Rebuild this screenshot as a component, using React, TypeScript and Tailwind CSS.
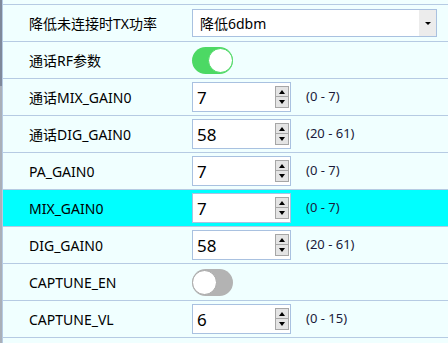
import React from 'react'

type Row =
  | { kind: 'select'; label: string; value: string }
  | { kind: 'toggle'; label: string; on: boolean }
  | { kind: 'spin'; label: string; value: string; range: string; active?: boolean }

const rows: Row[] = [
  { kind: 'select', label: '降低未连接时TX功率', value: '降低6dbm' },
  { kind: 'toggle', label: '通话RF参数', on: true },
  { kind: 'spin', label: '通话MIX_GAIN0', value: '7', range: '(0 - 7)' },
  { kind: 'spin', label: '通话DIG_GAIN0', value: '58', range: '(20 - 61)' },
  { kind: 'spin', label: 'PA_GAIN0', value: '7', range: '(0 - 7)' },
  { kind: 'spin', label: 'MIX_GAIN0', value: '7', range: '(0 - 7)', active: true },
  { kind: 'spin', label: 'DIG_GAIN0', value: '58', range: '(20 - 61)' },
  { kind: 'toggle', label: 'CAPTUNE_EN', on: false },
  { kind: 'spin', label: 'CAPTUNE_VL', value: '6', range: '(0 - 15)' },
]

function Toggle({ on }: { on: boolean }) {
  return (
    <div
      className={
        on
          ? 'flex h-[27px] w-[41px] items-center justify-end rounded-full bg-[#4cd964]'
          : 'flex h-[27px] w-[41px] items-center justify-start rounded-full bg-[#b3b3b3]'
      }
    >
      <div
        className={
          on
            ? 'h-[25px] w-[25px] rounded-full border border-[#4cd964] bg-white'
            : 'h-[25px] w-[25px] rounded-full border border-[#a8a8a8] bg-white'
        }
      />
    </div>
  )
}

function Spinner({ value }: { value: string }) {
  return (
    <div className="flex h-[30px] w-[99px] items-center border border-[#a9c1e0] bg-white pl-[4px] pr-px">
      <span className="flex-1 text-[17px] leading-none text-black">{value}</span>
      <div className="flex flex-col">
        <div className="flex h-[11px] w-[14px] items-center justify-center border border-[#a6a6a6] bg-[#e4e4e4]">
          <div className="h-0 w-0 border-x-[3px] border-b-[4px] border-x-transparent border-b-black" />
        </div>
        <div className="-mt-px flex h-[12px] w-[14px] items-center justify-center border border-[#a6a6a6] bg-[#e4e4e4]">
          <div className="h-0 w-0 border-x-[3px] border-t-[4px] border-x-transparent border-t-black" />
        </div>
      </div>
    </div>
  )
}

function Select({ value }: { value: string }) {
  return (
    <div className="flex h-[28px] w-[245px] items-center border border-[#a9c1e0] bg-white pl-[7px]">
      <span className="flex-1 text-[14px] text-black">{value}</span>
      <div className="flex h-full w-[17px] items-center justify-center bg-[#ececec]">
        <div className="h-0 w-0 border-x-[3px] border-t-[3px] border-x-transparent border-t-black" />
      </div>
    </div>
  )
}

export default function App() {
  return (
    <div
      className="flex h-[343px] w-[448px] overflow-hidden bg-[#f0ffff]"
      style={{ fontFamily: '"Noto Sans", "Noto Sans CJK SC", sans-serif' }}
    >
      <div className="flex w-[2px] flex-col">
        <div className="h-[86px] bg-[#7f899b]" />
        <div className="flex-1 bg-[#aab0b9]" />
      </div>
      <div className="flex flex-1 flex-col border-l border-[#b6cbe3]">
        <div className="h-[4px]" />
        {rows.map((row, i) => (
          <div
            key={i}
            className={
              row.kind === 'spin' && row.active
                ? 'flex h-[37px] items-center border-t border-[#b6cbe3] bg-[#00ffff]'
                : 'flex h-[37px] items-center border-t border-[#b6cbe3]'
            }
          >
            <div className="w-[189px] pl-[26px] text-[14px] text-black">{row.label}</div>
            {row.kind === 'select' && <Select value={row.value} />}
            {row.kind === 'toggle' && <Toggle on={row.on} />}
            {row.kind === 'spin' && (
              <>
                <Spinner value={row.value} />
                <span className="ml-[15px] text-[13px] text-[#1a1a3a]">{row.range}</span>
              </>
            )}
          </div>
        ))}
        <div className="flex-1 border-t border-[#b6cbe3]" />
      </div>
    </div>
  )
}
